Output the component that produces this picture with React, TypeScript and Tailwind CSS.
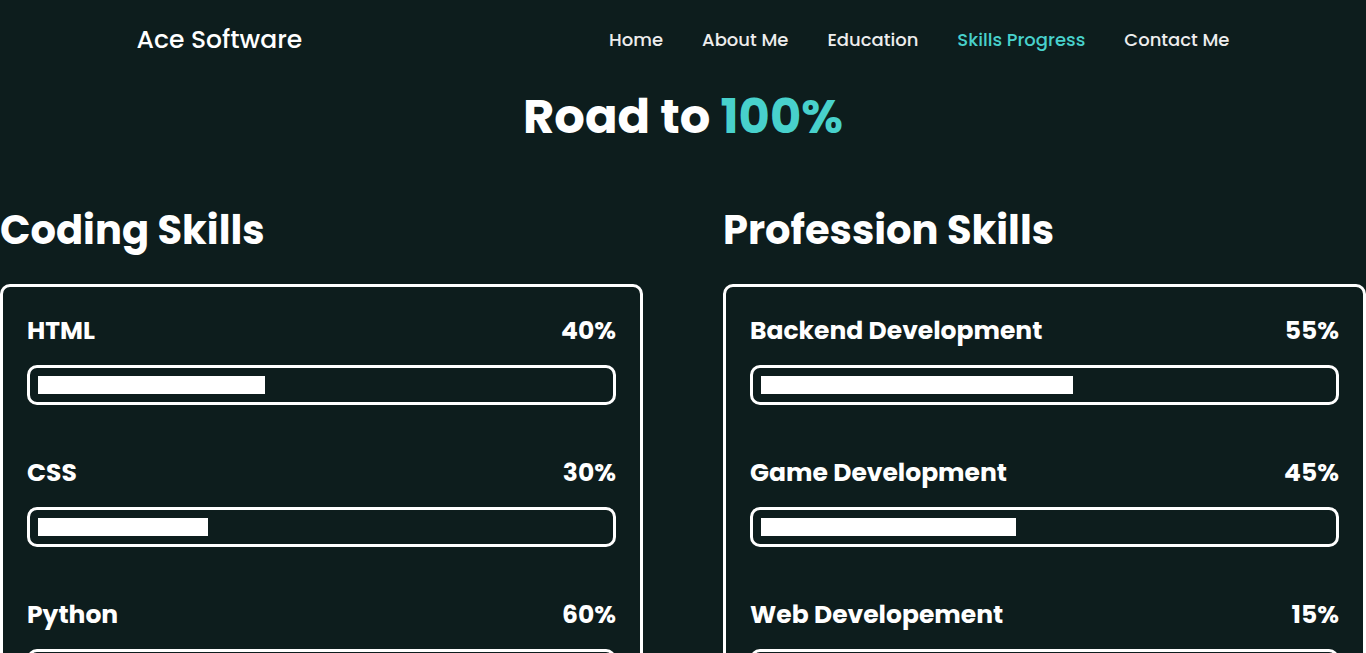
type Skill = { name: string; value: number };

const links = ["Home", "About Me", "Education", "Skills Progress", "Contact Me"];
const activeLink = "Skills Progress";

const coding: Skill[] = [
  { name: "HTML", value: 40 },
  { name: "CSS", value: 30 },
  { name: "Python", value: 60 },
];

const profession: Skill[] = [
  { name: "Backend Development", value: 55 },
  { name: "Game Development", value: 45 },
  { name: "Web Developement", value: 15 },
];

function SkillRow({ name, value }: Skill) {
  return (
    <div>
      <h3 className="mb-[14px] flex justify-between text-[25px] leading-10 font-bold">
        {name}
        <span>{value}%</span>
      </h3>
      <div
        role="progressbar"
        aria-label={name}
        aria-valuenow={value}
        aria-valuemin={0}
        aria-valuemax={100}
        className="h-10 rounded-[10px] border-3 border-white p-2"
      >
        <div className="h-[18px] bg-white" style={{ width: `${value}%` }} />
      </div>
    </div>
  );
}

function SkillColumn({ title, skills }: { title: string; skills: Skill[] }) {
  return (
    <section className="min-w-0 flex-1">
      <h2 className="mb-6 text-[40px] leading-[60px] font-bold">{title}</h2>
      <div className="flex flex-col gap-12 rounded-[10px] border-3 border-white p-6">
        {skills.map((skill) => (
          <SkillRow key={skill.name} {...skill} />
        ))}
      </div>
    </section>
  );
}

export default function App() {
  return (
    <div className="h-screen overflow-x-hidden overflow-y-auto bg-[#0d1d1d] font-['Poppins','Inter',sans-serif] text-white [scrollbar-width:none]">
      <header className="flex items-center justify-between px-[10%] py-5">
        <a href="#home" className="text-[25px] leading-10 font-medium">
          Ace Software
        </a>
        <nav className="flex gap-[39px] text-[18px] leading-7 font-medium">
          {links.map((link) => (
            <a
              key={link}
              href={`#${link.toLowerCase().replace(" ", "-")}`}
              className={link === activeLink ? "text-[#48d1cc]" : "text-[#ededed]"}
            >
              {link}
            </a>
          ))}
        </nav>
      </header>
      <main>
        <h1 className="mb-[46px] text-center text-[48px] leading-[74px] font-bold">
          Road to <span className="text-[#48d1cc]">100%</span>
        </h1>
        <div className="flex gap-20">
          <SkillColumn title="Coding Skills" skills={coding} />
          <SkillColumn title="Profession Skills" skills={profession} />
        </div>
      </main>
    </div>
  );
}
